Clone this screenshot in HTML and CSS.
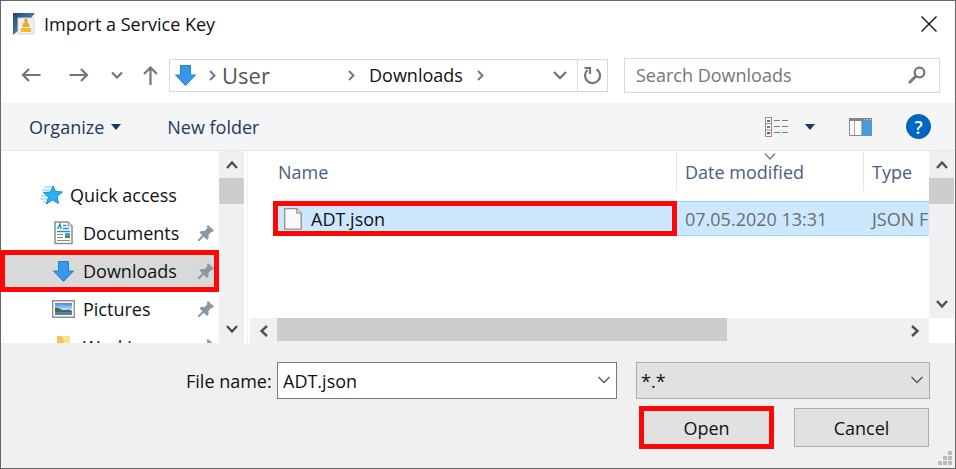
FILE: index.html
```html
<!DOCTYPE html>
<html lang="en">
<head>
<meta charset="utf-8">
<title>Import a Service Key</title>
<link rel="stylesheet" href="styles.css">
</head>
<body>
<main class="dialog">
  <header class="titlebar">
    <svg class="app-icon" width="23" height="23" viewBox="0 0 23 23" aria-hidden="true">
      <defs><linearGradient id="frame" x1="0" y1="0" x2="1" y2="1"><stop offset="0" stop-color="#1c4777"/><stop offset="1" stop-color="#6fa3cf"/></linearGradient>
      <linearGradient id="gold" x1="0" y1="0" x2="0" y2="1"><stop offset="0" stop-color="#d99a2b"/><stop offset="1" stop-color="#fbbf24"/></linearGradient></defs>
      <path d="M0 0h22l-4 5H5v13l-5 4z" fill="url(#frame)"/>
      <rect x="5" y="5" width="16" height="16" fill="#f3f1ec" stroke="#d2d2d2"/>
      <path d="M11.500 6h3v4h-3zM10.500 10h5l1.500 4H9zM8 15h10v4H8z" fill="url(#gold)"/>
    </svg>
    <h1>Import a Service Key</h1>
    <button class="plain close" aria-label="Close"><svg width="16" height="16" viewBox="0 0 16 16"><path d="M.5.5l15 15M15.5.5l-15 15" stroke="#111" stroke-width="1.4" fill="none"/></svg></button>
  </header>

  <nav class="navbar" aria-label="Location">
    <div class="history">
      <button class="plain" aria-label="Back"><svg width="20" height="16" viewBox="0 0 20 16"><path d="M19.500 8H2M8 2L2 8l6 6" stroke="#767676" stroke-width="2.200" fill="none"/></svg></button>
      <button class="plain" aria-label="Forward"><svg width="20" height="16" viewBox="0 0 20 16"><path d="M.5 8H18M12 2l6 6-6 6" stroke="#767676" stroke-width="2.200" fill="none"/></svg></button>
      <button class="plain" aria-label="Recent locations"><svg width="12" height="8" viewBox="0 0 12 8"><path d="M1 1.500l5 5 5-5" stroke="#767676" stroke-width="2.200" fill="none"/></svg></button>
      <button class="plain" aria-label="Up"><svg width="15" height="19" viewBox="0 0 15 19"><path d="M7.500 19V2M1 8l6.500-6.500L14 8" stroke="#767676" stroke-width="2.200" fill="none"/></svg></button>
    </div>
    <div class="address">
      <svg class="down-icon" width="21" height="21" viewBox="0 0 21 21" aria-hidden="true"><path d="M5.500.5h10v9.500h5L10.500 20.500.5 10h5z" fill="#3598ea" stroke="#2a7fc8"/></svg>
      <svg class="crumb" width="7" height="11" viewBox="0 0 7 11" aria-hidden="true"><path d="M1 1l4.500 4.500L1 10" stroke="#777" stroke-width="2" fill="none"/></svg>
      <a class="user" href="#">User</a>
      <svg class="crumb" width="7" height="11" viewBox="0 0 7 11" aria-hidden="true"><path d="M1 1l4.500 4.500L1 10" stroke="#777" stroke-width="2" fill="none"/></svg>
      <a class="folder" href="#">Downloads</a>
      <svg class="crumb" width="7" height="11" viewBox="0 0 7 11" aria-hidden="true"><path d="M1 1l4.500 4.500L1 10" stroke="#777" stroke-width="2" fill="none"/></svg>
      <button class="plain drop" aria-label="Previous locations"><svg width="14" height="9" viewBox="0 0 14 9"><path d="M1 1l6 6 6-6" stroke="#777" stroke-width="2.400" fill="none"/></svg></button>
      <button class="plain refresh" aria-label="Refresh"><svg width="19" height="19" viewBox="0 0 19 19"><path d="M13.500 3.200A7.500 7.500 0 1 1 4.500 4M1.500 2h5.500v6" stroke="#777" stroke-width="2.200" fill="none"/></svg></button>
    </div>
    <div class="search">
      <input type="search" placeholder="Search Downloads" aria-label="Search Downloads">
      <svg width="18" height="18" viewBox="0 0 18 18" aria-hidden="true"><circle cx="11.500" cy="6.500" r="4.800" stroke="#767676" stroke-width="2.200" fill="none"/><path d="M8 10L1 17" stroke="#767676" stroke-width="2.800"/></svg>
    </div>
  </nav>

  <div class="toolbar">
    <button class="plain organize">Organize <svg width="10" height="6" viewBox="0 0 10 6"><path d="M0 0h10L5 6z" fill="#153a66"/></svg></button>
    <button class="plain">New folder</button>
    <div class="tools">
      <button class="plain view" aria-label="Change your view"><svg width="24" height="20" viewBox="0 0 24 20"><path d="M.5.5h6v19h-6zM.5 6.500h6M.5 13h6" fill="#fff" stroke="#8b8b8b"/><path d="M9 3.500h6M17 3.500h6M9 9.500h6M17 9.500h6M9 15.500h6M17 15.500h6" stroke="#7c7c7c"/><path d="M2 3h3v2H2z" fill="#2f84b8"/><path d="M2 9h3v2H2z" fill="#9a7a3c"/><path d="M2 15h3v2H2z" fill="#d02b1c"/></svg><svg width="10" height="6" viewBox="0 0 10 6"><path d="M0 0h10L5 6z" fill="#153a66"/></svg></button>
      <button class="plain" aria-label="Preview pane"><svg width="23" height="18" viewBox="0 0 23 18"><path d="M.5.5h22v17H.5z" fill="#fff" stroke="#8a8a8a"/><path d="M0 0h23v3H0z" fill="#858585"/><path d="M13 3h9v14h-9z" fill="#409ce5"/><path d="M5.500 3v14M12.500 3v14" stroke="#aaa"/><path d="M15 1.500h1M18 1.500h1M21 1.500h1" stroke="#ddd"/></svg></button>
      <button class="plain help" aria-label="Help">?</button>
    </div>
  </div>

  <section class="browser">
    <div class="sidebar">
      <ul class="places">
        <li class="root"><svg width="23" height="20" viewBox="0 0 23 20" aria-hidden="true"><path d="M4 2h8M2 5h8M1 11h6M0 14h7M3 17h4" stroke="#79c9f2"/><path d="M13 1l2.500 5.500 7 .5-5.500 4.500 1.500 7L12.500 15l-6 4 2-7-5-4.500 7-.5z" fill="#2bb0f4" stroke="#1787cb"/></svg><a href="#">Quick access</a></li>
        <li><svg width="20" height="24" viewBox="0 0 20 24" aria-hidden="true"><path d="M1 1h13l4 4v17.500H1z" fill="#fff" stroke="#8d8d8d" stroke-width="1.500"/><path d="M14 1v4h4" fill="#ddd" stroke="#8d8d8d"/><path d="M3.500 8L6 3l1 5M9 4.500h3M9 7.500h6M3 10.500h13" stroke="#1f93d0" stroke-width="1.500" fill="none"/><path d="M3 13.500h6M3 16.500h6M3 19.500h13" stroke="#888"/><path d="M11 12h5v5h-5z" fill="#4b9cc8"/><path d="M11 15h5v2h-5z" fill="#4b8d58"/></svg><a href="#">Documents</a><svg class="pin" width="16" height="16" viewBox="0 0 16 16" aria-hidden="true"><path d="M10 0l6 5.500-1.500 1.500-1-.2L10.500 10v3.500L9 15l-3.300-3.300L1.500 16H0v-1.500l4.300-4.200L1.500 7.500 3 6h3.500l3-3-.7-1.700z" fill="#8b98a1"/></svg></li>
        <li class="current marked"><svg width="21" height="21" viewBox="0 0 21 21" aria-hidden="true"><path d="M5.500.5h10v9.500h5L10.500 20.500.5 10h5z" fill="#3598ea" stroke="#2a7fc8"/></svg><a href="#">Downloads</a><svg class="pin" width="16" height="16" viewBox="0 0 16 16" aria-hidden="true"><path d="M10 0l6 5.500-1.500 1.500-1-.2L10.500 10v3.500L9 15l-3.300-3.300L1.500 16H0v-1.500l4.300-4.200L1.500 7.500 3 6h3.500l3-3-.7-1.700z" fill="#8b98a1"/></svg></li>
        <li><svg width="23" height="18" viewBox="0 0 23 18" aria-hidden="true"><defs><linearGradient id="sky" x1="0" y1="0" x2="0" y2="1"><stop offset="0" stop-color="#3f86df"/><stop offset=".6" stop-color="#d3e9f8"/></linearGradient></defs><path d="M.7.7h21.600v16.600H.7z" fill="#fff" stroke="#8f8f8f" stroke-width="1.400"/><path d="M3 3h17v12H3z" fill="url(#sky)"/><path d="M3 8c4-1 5 2 8 2s6-1 9 1v1H3z" fill="#3d6b55"/><path d="M3 12h17v3H3z" fill="#4e86a3"/></svg><a href="#">Pictures</a><svg class="pin" width="16" height="16" viewBox="0 0 16 16" aria-hidden="true"><path d="M10 0l6 5.500-1.500 1.500-1-.2L10.500 10v3.500L9 15l-3.300-3.300L1.500 16H0v-1.500l4.300-4.200L1.500 7.500 3 6h3.500l3-3-.7-1.700z" fill="#8b98a1"/></svg></li>
        <li><svg width="18" height="24" viewBox="0 0 18 24" aria-hidden="true"><path d="M2 1h13v22H2z" fill="#ffe08a"/><path d="M2 1h4l3 4-3 18H2z" fill="#f1c75b"/></svg><a href="#">Working</a><svg class="pin" width="16" height="16" viewBox="0 0 16 16" aria-hidden="true"><path d="M10 0l6 5.500-1.500 1.500-1-.2L10.500 10v3.500L9 15l-3.300-3.300L1.500 16H0v-1.500l4.300-4.200L1.500 7.500 3 6h3.500l3-3-.7-1.700z" fill="#8b98a1"/></svg></li>
      </ul>
      <div class="scroll vertical">
        <button class="plain" aria-label="Scroll up"><svg width="12" height="9" viewBox="0 0 12 9"><path d="M1 8l5-5.500L11 8" stroke="#505050" stroke-width="2.400" fill="none"/></svg></button>
        <div class="thumb"></div>
        <button class="plain" aria-label="Scroll down"><svg width="12" height="9" viewBox="0 0 12 9"><path d="M1 1l5 5.500L11 1" stroke="#505050" stroke-width="2.400" fill="none"/></svg></button>
      </div>
    </div>
    <div class="listing">
      <div class="files">
        <table>
          <colgroup><col><col class="col-date"><col class="col-type"></colgroup>
          <thead>
            <tr>
              <th><div class="head">Name</div></th>
              <th><div class="head">Date modified<svg class="sort" width="12" height="7" viewBox="0 0 12 7" aria-hidden="true"><path d="M1 .5L6 6l5-5.500" stroke="#777" stroke-width="1.200" fill="none"/></svg></div></th>
              <th><div class="head last">Type</div></th>
            </tr>
          </thead>
          <tbody>
            <tr>
              <td class="name marked"><div class="file"><svg width="18" height="22" viewBox="0 0 18 22" aria-hidden="true"><path d="M.7.7h12l4.500 4.500v16H.7z" fill="#fafafa" stroke="#909090" stroke-width="1.300"/><path d="M12.700.7v4.500h4.500" fill="#ddd" stroke="#909090"/></svg>ADT.json</div></td>
              <td>07.05.2020 13:31</td>
              <td>JSON File</td>
            </tr>
          </tbody>
        </table>
      </div>
      <div class="scroll vertical">
        <button class="plain" aria-label="Scroll up"><svg width="12" height="9" viewBox="0 0 12 9"><path d="M1 8l5-5.500L11 8" stroke="#505050" stroke-width="2.400" fill="none"/></svg></button>
        <div class="thumb"></div>
        <button class="plain" aria-label="Scroll down"><svg width="12" height="9" viewBox="0 0 12 9"><path d="M1 1l5 5.500L11 1" stroke="#505050" stroke-width="2.400" fill="none"/></svg></button>
      </div>
      <div class="scroll horizontal">
        <button class="plain" aria-label="Scroll left"><svg width="9" height="12" viewBox="0 0 9 12"><path d="M8 1L2.500 6 8 11" stroke="#505050" stroke-width="2.400" fill="none"/></svg></button>
        <div class="track"><div class="thumb"></div></div>
        <button class="plain" aria-label="Scroll right"><svg width="9" height="12" viewBox="0 0 9 12"><path d="M1 1l5.500 5L1 11" stroke="#505050" stroke-width="2.400" fill="none"/></svg></button>
      </div>
    </div>
  </section>

  <footer class="footer">
    <div class="fields">
      <label for="filename">File name:</label>
      <div class="combo">
        <input id="filename" type="text" value="ADT.json">
        <svg width="12" height="8" viewBox="0 0 12 8" aria-hidden="true"><path d="M.5 1L6 6.500 11.500 1" stroke="#555" stroke-width="1.300" fill="none"/></svg>
      </div>
      <div class="combo filter">
        <select aria-label="File type"><option>*.*</option></select>
        <svg width="12" height="8" viewBox="0 0 12 8" aria-hidden="true"><path d="M.5 1L6 6.500 11.500 1" stroke="#555" stroke-width="1.300" fill="none"/></svg>
      </div>
    </div>
    <div class="actions">
      <button class="push marked">Open</button>
      <button class="push">Cancel</button>
    </div>
    <svg class="grip" width="14" height="14" viewBox="0 0 14 14" aria-hidden="true"><path d="M10 0h4v4h-4zM5 5h4v4H5zM10 5h4v4h-4zM0 10h4v4H0zM5 10h4v4H5zM10 10h4v4h-4z" fill="#bbb"/></svg>
  </footer>
</main>
</body>
</html>
```

FILE: styles.css
```css
* { box-sizing: border-box; }

body {
  margin: 0;
  background: #fff;
  color: #111;
  font: 18px/24px "Open Sans", "Noto Sans", sans-serif;
}

a { color: inherit; text-decoration: none; }
svg { display: block; flex: none; }
input, select, button { font: inherit; color: inherit; border-radius: 0; }

.plain {
  display: flex;
  align-items: center;
  justify-content: center;
  padding: 0;
  border: 0;
  background: none;
}

.dialog {
  display: flex;
  flex-direction: column;
  min-height: 100vh;
  border: 1px solid #666;
}

/* Title bar */
.titlebar {
  display: flex;
  align-items: center;
  height: 46px;
  padding: 0 18px 0 12px;
}
.titlebar h1 { flex: 1; margin: 0 0 0 8px; font-size: 18px; font-weight: 400; }

/* Navigation row */
.navbar {
  display: flex;
  align-items: center;
  height: 56px;
  padding: 0 15px 0 20px;
}
.history { display: flex; align-items: center; gap: 28px; width: 148px; }
.history .plain:nth-child(n+3) { margin-left: -6px; }
.history .plain:nth-child(4) { margin-left: -8px; }
.address {
  display: flex;
  align-items: center;
  flex: 439;
  min-width: 0;
  height: 33px;
  padding-left: 5px;
  border: 1px solid #d9d9d9;
}
.address .down-icon { margin-right: 13px; }
.user { width: 126px; margin-left: 6px; font-size: 22px; color: #555; }
.folder { margin: 0 14px; }
.drop { width: 34px; margin-left: auto; }
.refresh { width: 30px; height: 100%; border-left: 1px solid #d9d9d9; }
.search {
  display: flex;
  align-items: center;
  flex: 0 1 316px;
  height: 35px;
  margin-left: 16px;
  padding: 0 13px 0 11px;
  border: 1px solid #d9d9d9;
}
.search input { flex: 1; min-width: 0; padding: 0; border: 0; outline: 0; background: none; }
.search input::placeholder { color: #767676; opacity: 1; }

/* Command bar */
.toolbar {
  display: flex;
  align-items: center;
  height: 48px;
  padding: 0 24px 0 28px;
  border-bottom: 1px solid #e7e7e7;
  background: #f4f5f7;
  color: #1e395b;
}
.organize { gap: 7px; margin-right: 46px; }
.tools { display: flex; align-items: center; gap: 34px; margin-left: auto; }
.view { gap: 16px; }
.help {
  width: 25px;
  height: 25px;
  border: 1px solid #0a56a4;
  border-radius: 50%;
  background: #0067c8;
  color: #fff;
  font-weight: 600;
}

/* Folder tree and file list */
.browser { display: flex; height: 192px; padding-right: 1px; }
.sidebar { display: flex; width: 247px; padding-right: 3px; border-right: 1px solid #f0f0f0; }
.places {
  flex: 1;
  margin: 0;
  padding: 25px 0 0;
  list-style: none;
  overflow-x: visible;
  overflow-y: clip;
}
.places li {
  display: grid;
  grid-template-columns: 23px 1fr 16px;
  align-items: center;
  gap: 8px;
  height: 38px;
  padding: 0 5px 0 51px;
}
.places li > svg:first-child { justify-self: center; }
.places .root { padding-left: 39px; gap: 7px; }
.places .current {
  position: relative;
  height: 42px;
  margin: -2px 0 -2px -1px;
  padding: 0 0 0 47px;
  background: #d9d9d9;
}
.marked { border: 5px solid #ff0505; }

.scroll { display: flex; background: #f0f0f0; }
.scroll .thumb { background: #cdcdcd; }
.vertical { flex-direction: column; width: 25px; }
.vertical .plain { height: 27px; }
.vertical .thumb { height: 26px; margin-bottom: auto; }
.horizontal .plain { width: 27px; }
.horizontal .track { flex: 1; }
.horizontal .thumb { width: 72%; height: 23px; }

.listing {
  display: grid;
  flex: 1;
  min-width: 0;
  grid-template: 1fr 25px / 1fr 25px;
  padding-left: 2px;
}
.files { min-width: 0; padding-left: 23px; overflow: hidden; }
table { width: 100%; table-layout: fixed; border-collapse: separate; border-spacing: 0; }
.col-date { width: 187px; }
.col-type { width: 65px; }
th { padding: 0 0 10px; font-weight: 400; text-align: left; color: #4c607a; }
.head {
  position: relative;
  height: 40px;
  padding: 9px 0 0 8px;
  border-right: 1px solid #e5e5e5;
}
th:first-child .head { padding-left: 5px; }
.head.last { border-right: 0; }
.sort { position: absolute; top: 2px; left: 50%; margin-left: -6px; }
td {
  height: 35px;
  padding: 0 0 0 8px;
  border: solid #99d1ff;
  border-width: 1px 0;
  background: #cce8ff;
  color: #6d6d6d;
  overflow: hidden;
  white-space: nowrap;
}
td.name { padding: 0 0 0 6px; border: 5px solid #ff0505; color: #111; }
.file { display: flex; align-items: center; gap: 9px; }

/* File name, filter and buttons */
.footer { position: relative; flex: 1; padding: 19px 25px 18px 185px; background: #f0f0f0; }
.fields { display: flex; align-items: center; }
.fields label { width: 91px; white-space: nowrap; }
.combo { position: relative; flex: 340; height: 37px; }
.combo.filter { flex: 294; margin-left: 19px; }
.combo input, .combo select {
  width: 100%;
  height: 100%;
  padding: 0 30px 0 5px;
  border: 1px solid #7a7a7a;
  background: #fff;
  appearance: none;
}
.combo select { padding-left: 4px; border-color: #adadad; background: #e1e1e1; }
.combo svg { position: absolute; top: 14px; right: 7px; pointer-events: none; }
.actions { display: flex; align-items: center; justify-content: flex-end; gap: 20px; margin-top: 7px; padding-right: 1px; }
.push { width: 135px; height: 39px; border: 1px solid #adadad; background: #e1e1e1; }
.push.marked { height: 43px; border: 5px solid #ff0505; }
.grip { position: absolute; right: 3px; bottom: 3px; }
```
